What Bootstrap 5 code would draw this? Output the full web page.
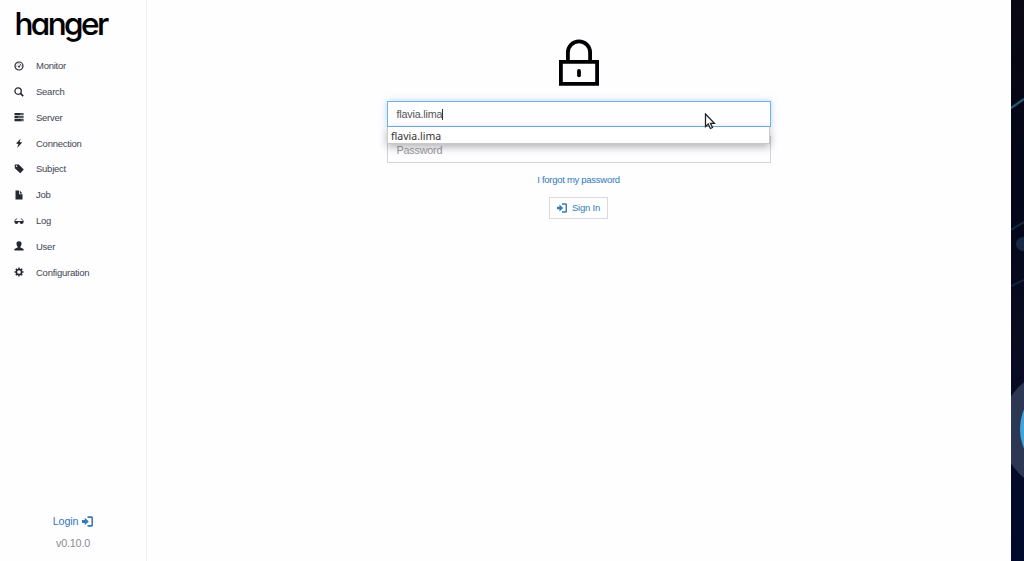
<!DOCTYPE html>
<html lang="en">
<head>
<meta charset="utf-8">
<meta name="viewport" content="width=device-width, initial-scale=1">
<title>hanger</title>
<link href="https://cdn.jsdelivr.net/npm/bootstrap@5.3.0/dist/css/bootstrap.min.css" rel="stylesheet">
<style>
body{font-family:"Liberation Sans",Arial,sans-serif;font-size:9px;background:#fefdff;color:#3a3f48}
.side{width:147px;border-right:1px solid #f0f0f4}
.logo{font:500 31.5px/40px Inter,sans-serif;font-feature-settings:"cv11";letter-spacing:-2.6px;-webkit-text-stroke:.15px #000;color:#000;padding:4px 0 0 14.5px;height:53px}
.side .nav-link{height:25.8px;padding:1px 0 0 13.5px;color:#41464e;gap:12.5px;font-size:9.5px;letter-spacing:-.25px}
.side .nav-link svg{width:10px;height:10px;color:#25292f;margin-top:-1px}
.foot{font-size:10.8px;letter-spacing:-.2px;line-height:14px;padding-bottom:11px;color:#8c8c8c}
.foot a{margin-bottom:8px}
a{color:#337ab7;text-decoration:none}
.login{width:384px;padding-top:38px}
.field{margin-top:14px}
.login .form-control{height:26px;border-radius:0;font-size:10.8px;letter-spacing:-.2px;padding:0 9px;border:1px solid #d4d4d6;background:#fefdff;color:#555}
.login .entry{border-color:#74b2e2;box-shadow:0 0 6px rgba(102,175,233,.5);line-height:25px}
.login .pass{margin-top:9px;height:27px}
.login .pass::placeholder{color:#999;opacity:1}
.caret{width:1px;height:11px;background:#333}
.suggest{top:26px;left:0;width:383px;height:17px;z-index:3;background:#fff;border:1px solid #c8c8c8;border-top:0;box-shadow:0 3px 8px rgba(0,0,0,.3);font:10.5px/18px "Noto Sans",sans-serif;color:#333;padding-left:3.5px}
.pointer{left:317px;top:12px;z-index:4}
.forgot{margin-top:10px;font-size:9.5px;letter-spacing:-.28px;line-height:14px}
.sign{height:22px;width:59px;border:1px solid #d8dade;border-radius:0;padding:0;font-size:9.5px;letter-spacing:-.2px;color:#337ab7;gap:5px;background:#fff;margin-top:10px}
.strip{width:14px}
</style>
</head>
<body class="vh-100 d-flex overflow-hidden">
<svg class="d-none">
<symbol id="in" viewBox="0 0 12 12"><path d="M0 4.400h3V1.900L7.400 6 3 10.100V7.600H0z" fill="currentColor"/><path d="M6 1.200h4q1.200 0 1.200 1.200v7.200q0 1.200-1.200 1.200H6" fill="none" stroke="currentColor" stroke-width="1.800"/></symbol>
</svg>
<aside class="side d-flex flex-column flex-shrink-0">
<div class="logo">hanger</div>
<nav class="nav flex-column">
<a class="nav-link d-flex align-items-center" href="#"><svg viewBox="0 0 10 10"><circle cx="5" cy="5" r="4" fill="none" stroke="currentColor" stroke-width="1.200"/><path d="M5 5.8 6.8 3M2.5 5h.8M3.5 2.8l.4.5M5 2.2v.7M6.8 5h.8" stroke="currentColor" stroke-width=".8"/><circle cx="5" cy="5.700" r=".9" fill="currentColor"/></svg>Monitor</a>
<a class="nav-link d-flex align-items-center" href="#"><svg viewBox="0 0 10 10"><circle cx="4.100" cy="4.100" r="3.200" fill="none" stroke="currentColor" stroke-width="1.300"/><path d="m6.400 6.400 2.800 2.800" stroke="currentColor" stroke-width="1.700"/></svg>Search</a>
<a class="nav-link d-flex align-items-center" href="#"><svg viewBox="0 0 10 10"><path d="M.5 1h9v2.200h-9zM.5 4h9v2.200h-9zM.5 7h9v2.200h-9z" fill="currentColor"/><path d="M6 2.100h3M4 5.100h5M7 8.100h2" stroke="#8f9cae" stroke-width=".9"/></svg>Server</a>
<a class="nav-link d-flex align-items-center" href="#"><svg viewBox="0 0 10 10"><path d="M6.700.5 2 5.500l2.400.4-1.300 4L8.200 4.400l-2.600-.5z" fill="currentColor"/></svg>Connection</a>
<a class="nav-link d-flex align-items-center" href="#"><svg viewBox="0 0 10 10"><path fill-rule="evenodd" d="M.8.6h4l5 4.900-3.500 3.800L.8 4.300zm1.700.9a.7.7 0 1 0 .1 1.500.7.7 0 0 0-.1-1.500z" fill="currentColor"/></svg>Subject</a>
<a class="nav-link d-flex align-items-center" href="#"><svg viewBox="0 0 10 10"><path d="M1.500.5h3.700v3.800h3.300v5.200h-7zM6 .7l2.400 2.800H6z" fill="currentColor"/></svg>Job</a>
<a class="nav-link d-flex align-items-center" href="#"><svg viewBox="0 0 10 10"><path d="M.3 5h9.400q0 2.900-2.200 2.900T5.400 5.800h-.8Q4.500 7.900 2.500 7.900T.3 5z" fill="currentColor"/><path d="M.7 5 2.200 2.900h1M9.300 5 7.800 2.900h-1" fill="none" stroke="currentColor" stroke-width=".8"/></svg>Log</a>
<a class="nav-link d-flex align-items-center" href="#"><svg viewBox="0 0 10 10"><path d="M5 .3c2 0 2.700 1.100 2.500 2.700S6.800 5 6.400 5.600v1l3.200 1.300v1.700H.4V7.900l3.200-1.300v-1C3.200 5 2.700 4.500 2.500 3S3 .3 5 .3z" fill="currentColor"/></svg>User</a>
<a class="nav-link d-flex align-items-center" href="#"><svg viewBox="0 0 10 10"><circle cx="5" cy="5" r="2.600" fill="none" stroke="currentColor" stroke-width="1.500"/><path d="M5 .5v1.800M5 7.700v1.800M.5 5h1.800M7.700 5h1.800M1.800 1.800l1.300 1.300M6.900 6.900l1.300 1.300M1.800 8.200l1.300-1.300M6.900 3.100l1.300-1.300" stroke="currentColor" stroke-width="1.500"/></svg>Configuration</a>
</nav>
<div class="foot mt-auto text-center"><a href="#" class="d-flex justify-content-center align-items-center gap-1">Login <svg width="11" height="11"><use href="#in"/></svg></a>v0.10.0</div>
</aside>
<main class="flex-grow-1 d-flex justify-content-center">
<form class="login d-flex flex-column align-items-center">
<svg width="42" height="49" viewBox="0 0 42 49" fill="none" stroke="#000" stroke-width="3.800"><path d="M2.900 23.900h36.200v21.900H2.900z"/><path d="M9.900 23.900V14.300a11.100 10.900 0 0 1 22.200 0v9.600"/><path d="M21 33v4.300" stroke-linecap="round"/></svg>
<div class="position-relative w-100 field"><div class="form-control entry d-flex align-items-center" role="textbox">flavia.lima<span class="caret"></span></div>
<div class="suggest position-absolute">flavia.lima</div>
<svg class="pointer position-absolute" width="12" height="17" viewBox="0 0 12 17"><path d="M1.500 1v12.500l2.700-2.500 2.200 4.500 2.100-1-2-4.200h3.900z" fill="#fff" stroke="#222" stroke-width="1.300"/></svg></div>
<input class="form-control pass" type="password" placeholder="Password">
<a href="#" class="forgot">I forgot my password</a>
<button type="button" class="btn sign d-flex align-items-center justify-content-center"><svg width="10" height="10"><use href="#in"/></svg>Sign In</button>
</form>
</main>
<svg class="strip flex-shrink-0" width="14" height="561" viewBox="0 0 14 561"><defs><linearGradient id="night" x2="0" y2="1"><stop stop-color="#090812"/><stop offset=".35" stop-color="#030519"/><stop offset=".6" stop-color="#090b20"/><stop offset="1" stop-color="#000a2c"/></linearGradient><clipPath id="edge"><path d="M1 0h13v561H1z"/></clipPath></defs><g clip-path="url(#edge)"><path d="M1 0h13v561H1z" fill="url(#night)"/><path d="M1 108l13-9" stroke="#28546e" stroke-width="2.500"/><path d="m1 230 13-8" stroke="#152b42" stroke-width="2"/><path d="m1 286 13-6" stroke="#17213a" stroke-width="2"/><circle cx="13" cy="244" r="7" fill="#172942"/><circle cx="52" cy="430" r="61" fill="#2c3853"/><ellipse cx="42" cy="429" rx="32" ry="40" fill="#42a4dc"/></g></svg>
<script src="https://cdn.jsdelivr.net/npm/bootstrap@5.3.0/dist/js/bootstrap.bundle.min.js"></script>
</body>
</html>
